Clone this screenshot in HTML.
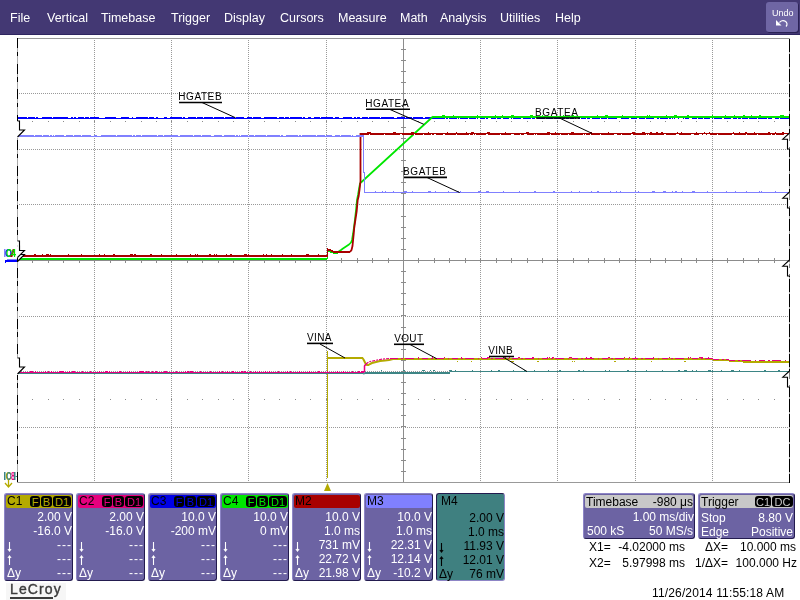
<!DOCTYPE html>
<html><head><meta charset="utf-8">
<style>
html,body{margin:0;padding:0;width:800px;height:600px;overflow:hidden;background:#fff;}
body{position:relative;font-family:"Liberation Sans",sans-serif;-webkit-font-smoothing:antialiased;}
.t,.mi,svg{will-change:transform;}
#menu{position:absolute;left:0;top:0;width:800px;height:34px;background:#433873;border-bottom:1px solid #2e2560;}
.mi{position:absolute;top:11px;color:#fff;font-size:12.5px;line-height:15px;white-space:nowrap;}
#undo{position:absolute;left:766px;top:2px;width:32px;height:30px;background:#6f66a4;border-radius:3px;box-shadow:1px 1px 0 #2a2255;}
svg{position:absolute;left:0;top:0;}
.pan{position:absolute;top:493px;width:69px;height:88px;background:#6c63a3;border-top:1px solid #8d85c6;border-left:1px solid #8d85c6;border-right:1px solid #231b4f;border-bottom:1px solid #231b4f;border-radius:3px;box-sizing:border-box;}
.ph{position:absolute;top:495px;width:66px;height:13px;border-radius:2px;}
.t{position:absolute;font-size:12px;line-height:14px;white-space:nowrap;color:#fff;}
.r{text-align:right;}
.bd{position:absolute;top:496px;height:11px;background:#000;border-radius:3px;font-size:11px;line-height:12px;text-align:center;}
</style></head><body>
<div id="menu">
<div class="mi" style="left:10px">File</div>
<div class="mi" style="left:47px">Vertical</div>
<div class="mi" style="left:101px">Timebase</div>
<div class="mi" style="left:171px">Trigger</div>
<div class="mi" style="left:224px">Display</div>
<div class="mi" style="left:280px">Cursors</div>
<div class="mi" style="left:338px">Measure</div>
<div class="mi" style="left:399.5px">Math</div>
<div class="mi" style="left:440px">Analysis</div>
<div class="mi" style="left:500px">Utilities</div>
<div class="mi" style="left:554.5px">Help</div>
<div id="undo"></div>
<div class="t" style="left:772px;top:6.5px;font-size:9px;line-height:12px;color:#fff">Undo</div>
</div>
<svg width="800" height="600" viewBox="0 0 800 600">
<g shape-rendering="crispEdges">
<line x1="17" y1="38.5" x2="790" y2="38.5" stroke="#999"/>
<line x1="17" y1="482.5" x2="790" y2="482.5" stroke="#999"/>
<line x1="17.5" y1="38" x2="17.5" y2="483" stroke="#aaa"/>
<line x1="789.5" y1="38" x2="789.5" y2="483" stroke="#aaa"/>
<line x1="17.5" y1="38" x2="17.5" y2="483" stroke="#000" stroke-width="1.3" stroke-dasharray="10 3.5 4.5 7.5"/>
<line x1="789.5" y1="38" x2="789.5" y2="483" stroke="#000" stroke-width="1.3" stroke-dasharray="12.5 2.5" stroke-dashoffset="-1"/>
<g stroke="#999" stroke-dasharray="1 1">
<line x1="94.5" y1="40" x2="94.5" y2="482"/>
<line x1="171.5" y1="40" x2="171.5" y2="482"/>
<line x1="248.5" y1="40" x2="248.5" y2="482"/>
<line x1="326.5" y1="40" x2="326.5" y2="482"/>
<line x1="480.5" y1="40" x2="480.5" y2="482"/>
<line x1="557.5" y1="40" x2="557.5" y2="482"/>
<line x1="635.5" y1="40" x2="635.5" y2="482"/>
<line x1="712.5" y1="40" x2="712.5" y2="482"/>
<line x1="19" y1="93.5" x2="788" y2="93.5"/>
<line x1="19" y1="149.5" x2="788" y2="149.5"/>
<line x1="19" y1="204.5" x2="788" y2="204.5"/>
<line x1="19" y1="316.5" x2="788" y2="316.5"/>
<line x1="19" y1="371.5" x2="788" y2="371.5"/>
<line x1="19" y1="427.5" x2="788" y2="427.5"/>
</g>
<g stroke="#8c8c8c">
<line x1="18" y1="260.5" x2="789" y2="260.5"/>
<line x1="403.5" y1="39" x2="403.5" y2="482"/>
<line x1="32.5" y1="258" x2="32.5" y2="263"/>
<line x1="48.5" y1="258" x2="48.5" y2="263"/>
<line x1="63.5" y1="258" x2="63.5" y2="263"/>
<line x1="79.5" y1="258" x2="79.5" y2="263"/>
<line x1="94.5" y1="258" x2="94.5" y2="263"/>
<line x1="110.5" y1="258" x2="110.5" y2="263"/>
<line x1="125.5" y1="258" x2="125.5" y2="263"/>
<line x1="141.5" y1="258" x2="141.5" y2="263"/>
<line x1="156.5" y1="258" x2="156.5" y2="263"/>
<line x1="171.5" y1="258" x2="171.5" y2="263"/>
<line x1="187.5" y1="258" x2="187.5" y2="263"/>
<line x1="202.5" y1="258" x2="202.5" y2="263"/>
<line x1="218.5" y1="258" x2="218.5" y2="263"/>
<line x1="233.5" y1="258" x2="233.5" y2="263"/>
<line x1="249.5" y1="258" x2="249.5" y2="263"/>
<line x1="264.5" y1="258" x2="264.5" y2="263"/>
<line x1="279.5" y1="258" x2="279.5" y2="263"/>
<line x1="295.5" y1="258" x2="295.5" y2="263"/>
<line x1="310.5" y1="258" x2="310.5" y2="263"/>
<line x1="326.5" y1="258" x2="326.5" y2="263"/>
<line x1="341.5" y1="258" x2="341.5" y2="263"/>
<line x1="357.5" y1="258" x2="357.5" y2="263"/>
<line x1="372.5" y1="258" x2="372.5" y2="263"/>
<line x1="388.5" y1="258" x2="388.5" y2="263"/>
<line x1="403.5" y1="258" x2="403.5" y2="263"/>
<line x1="418.5" y1="258" x2="418.5" y2="263"/>
<line x1="434.5" y1="258" x2="434.5" y2="263"/>
<line x1="449.5" y1="258" x2="449.5" y2="263"/>
<line x1="465.5" y1="258" x2="465.5" y2="263"/>
<line x1="480.5" y1="258" x2="480.5" y2="263"/>
<line x1="496.5" y1="258" x2="496.5" y2="263"/>
<line x1="511.5" y1="258" x2="511.5" y2="263"/>
<line x1="527.5" y1="258" x2="527.5" y2="263"/>
<line x1="542.5" y1="258" x2="542.5" y2="263"/>
<line x1="557.5" y1="258" x2="557.5" y2="263"/>
<line x1="573.5" y1="258" x2="573.5" y2="263"/>
<line x1="588.5" y1="258" x2="588.5" y2="263"/>
<line x1="604.5" y1="258" x2="604.5" y2="263"/>
<line x1="619.5" y1="258" x2="619.5" y2="263"/>
<line x1="635.5" y1="258" x2="635.5" y2="263"/>
<line x1="650.5" y1="258" x2="650.5" y2="263"/>
<line x1="665.5" y1="258" x2="665.5" y2="263"/>
<line x1="681.5" y1="258" x2="681.5" y2="263"/>
<line x1="696.5" y1="258" x2="696.5" y2="263"/>
<line x1="712.5" y1="258" x2="712.5" y2="263"/>
<line x1="727.5" y1="258" x2="727.5" y2="263"/>
<line x1="743.5" y1="258" x2="743.5" y2="263"/>
<line x1="758.5" y1="258" x2="758.5" y2="263"/>
<line x1="774.5" y1="258" x2="774.5" y2="263"/>
<line x1="401" y1="49.5" x2="406" y2="49.5"/>
<line x1="401" y1="60.5" x2="406" y2="60.5"/>
<line x1="401" y1="71.5" x2="406" y2="71.5"/>
<line x1="401" y1="82.5" x2="406" y2="82.5"/>
<line x1="401" y1="93.5" x2="406" y2="93.5"/>
<line x1="401" y1="105.5" x2="406" y2="105.5"/>
<line x1="401" y1="116.5" x2="406" y2="116.5"/>
<line x1="401" y1="127.5" x2="406" y2="127.5"/>
<line x1="401" y1="138.5" x2="406" y2="138.5"/>
<line x1="401" y1="149.5" x2="406" y2="149.5"/>
<line x1="401" y1="160.5" x2="406" y2="160.5"/>
<line x1="401" y1="171.5" x2="406" y2="171.5"/>
<line x1="401" y1="182.5" x2="406" y2="182.5"/>
<line x1="401" y1="193.5" x2="406" y2="193.5"/>
<line x1="401" y1="204.5" x2="406" y2="204.5"/>
<line x1="401" y1="216.5" x2="406" y2="216.5"/>
<line x1="401" y1="227.5" x2="406" y2="227.5"/>
<line x1="401" y1="238.5" x2="406" y2="238.5"/>
<line x1="401" y1="249.5" x2="406" y2="249.5"/>
<line x1="401" y1="260.5" x2="406" y2="260.5"/>
<line x1="401" y1="271.5" x2="406" y2="271.5"/>
<line x1="401" y1="282.5" x2="406" y2="282.5"/>
<line x1="401" y1="293.5" x2="406" y2="293.5"/>
<line x1="401" y1="304.5" x2="406" y2="304.5"/>
<line x1="401" y1="315.5" x2="406" y2="315.5"/>
<line x1="401" y1="327.5" x2="406" y2="327.5"/>
<line x1="401" y1="338.5" x2="406" y2="338.5"/>
<line x1="401" y1="349.5" x2="406" y2="349.5"/>
<line x1="401" y1="360.5" x2="406" y2="360.5"/>
<line x1="401" y1="371.5" x2="406" y2="371.5"/>
<line x1="401" y1="382.5" x2="406" y2="382.5"/>
<line x1="401" y1="393.5" x2="406" y2="393.5"/>
<line x1="401" y1="404.5" x2="406" y2="404.5"/>
<line x1="401" y1="415.5" x2="406" y2="415.5"/>
<line x1="401" y1="426.5" x2="406" y2="426.5"/>
<line x1="401" y1="438.5" x2="406" y2="438.5"/>
<line x1="401" y1="449.5" x2="406" y2="449.5"/>
<line x1="401" y1="460.5" x2="406" y2="460.5"/>
<line x1="401" y1="471.5" x2="406" y2="471.5"/>
</g>
</g>
<line x1="18" y1="373" x2="327" y2="373" stroke="#b4aa00" stroke-width="2" shape-rendering="crispEdges"/>
<line x1="327.5" y1="351" x2="327.5" y2="478" stroke="#b4aa00" stroke-width="1" shape-rendering="crispEdges"/>
<line x1="327" y1="358" x2="363" y2="358" stroke="#b4aa00" stroke-width="2" shape-rendering="crispEdges"/>
<path d="M362.5 358 L363.5 359.5 L364.5 361.5 L365.5 363.5 L367 365 L368.5 365 L370 364 L372 363 L376 362 L380 361 L385 360.5 L389 360 L393 359" fill="none" stroke="#b4aa00" stroke-width="2" stroke-linejoin="round"/>
<line x1="393" y1="359" x2="713" y2="359" stroke="#b4aa00" stroke-width="2" shape-rendering="crispEdges"/>
<line x1="713" y1="360" x2="729" y2="360" stroke="#b4aa00" stroke-width="2" shape-rendering="crispEdges"/>
<line x1="729" y1="361" x2="743" y2="361" stroke="#b4aa00" stroke-width="2" shape-rendering="crispEdges"/>
<line x1="743" y1="362" x2="789" y2="362" stroke="#b4aa00" stroke-width="2" shape-rendering="crispEdges"/>
<line x1="18" y1="372.5" x2="364" y2="372.5" stroke="#e6007e" stroke-width="1" shape-rendering="crispEdges"/>
<path d="M364.5 372.5 L364.5 366 L366 364" fill="none" stroke="#e6007e" stroke-width="1.5" stroke-linejoin="round"/>
<g stroke-dasharray="3 1 2 1">
<path d="M366 364 L368 362.5 L370 361.5 L375 360.5 L380 359.5 L385 358.8 L392 358.5" fill="none" stroke="#e6007e" stroke-width="1.2" stroke-linejoin="round"/>
</g>
<g stroke-dasharray="6 3 2 2 9 4 1 3">
<line x1="392" y1="358.5" x2="713" y2="358.5" stroke="#e6007e" stroke-width="1" shape-rendering="crispEdges"/>
<line x1="713" y1="359.5" x2="729" y2="359.5" stroke="#e6007e" stroke-width="1" shape-rendering="crispEdges"/>
<line x1="729" y1="360.5" x2="789" y2="360.5" stroke="#e6007e" stroke-width="1" shape-rendering="crispEdges"/>
</g>
<line x1="18" y1="118" x2="789" y2="118" stroke="#0000ff" stroke-width="2" shape-rendering="crispEdges"/>
<line x1="18" y1="259" x2="327" y2="259" stroke="#00e600" stroke-width="2" shape-rendering="crispEdges"/>
<line x1="327.5" y1="250" x2="327.5" y2="259" stroke="#00e600" stroke-width="1.5" shape-rendering="crispEdges"/>
<line x1="327" y1="251" x2="330" y2="251" stroke="#00e600" stroke-width="2" shape-rendering="crispEdges"/>
<line x1="330" y1="252" x2="333" y2="252" stroke="#00e600" stroke-width="2" shape-rendering="crispEdges"/>
<line x1="333" y1="253" x2="338" y2="253" stroke="#00e600" stroke-width="2" shape-rendering="crispEdges"/>
<path d="M338 252 L341 250 L343 248.5 L346 246.5 L349 244.5 L351 242.5 L352 240 L353 234 L354 227 L355 219 L356 210 L357 200 L358 195 L359 189 L360 183.5 L361.5 182 L433 116.5" fill="none" stroke="#00e600" stroke-width="1.7" stroke-linejoin="round"/>
<line x1="433" y1="117" x2="789" y2="117" stroke="#00e600" stroke-width="2" shape-rendering="crispEdges"/>
<line x1="18" y1="256" x2="327" y2="256" stroke="#a80000" stroke-width="2" shape-rendering="crispEdges"/>
<line x1="327.5" y1="248" x2="327.5" y2="257" stroke="#a80000" stroke-width="1" shape-rendering="crispEdges"/>
<line x1="327" y1="250" x2="330.5" y2="250" stroke="#a80000" stroke-width="2" shape-rendering="crispEdges"/>
<line x1="330.5" y1="251" x2="333" y2="251" stroke="#a80000" stroke-width="2" shape-rendering="crispEdges"/>
<line x1="333" y1="252" x2="350" y2="252" stroke="#a80000" stroke-width="2" shape-rendering="crispEdges"/>
<path d="M350 252 L351.5 250 L352.5 246 L353 241 L353.7 234 L354.2 228 L355.5 219 L356.7 211 L357.7 200 L358.7 196 L359.5 190 L360.5 181 L360.5 133" fill="none" stroke="#a80000" stroke-width="1.8" stroke-linejoin="round"/>
<line x1="360" y1="134" x2="789" y2="134" stroke="#a80000" stroke-width="2" shape-rendering="crispEdges"/>
<line x1="18" y1="136" x2="364" y2="136" stroke="#8080ff" stroke-width="2" shape-rendering="crispEdges"/>
<line x1="363.5" y1="135" x2="363.5" y2="173" stroke="#8080ff" stroke-width="1" shape-rendering="crispEdges"/>
<line x1="364.5" y1="172" x2="364.5" y2="193" stroke="#8080ff" stroke-width="1" shape-rendering="crispEdges"/>
<line x1="364" y1="192.5" x2="789" y2="192.5" stroke="#8080ff" stroke-width="1" shape-rendering="crispEdges"/>
<line x1="18" y1="373.5" x2="363" y2="373.5" stroke="#3d8585" stroke-width="1" shape-rendering="crispEdges"/>
<path d="M363 373.5 L364 374 L365 372.5" fill="none" stroke="#3d8585" stroke-width="1.2" stroke-linejoin="round"/>
<line x1="365" y1="373" x2="450" y2="373" stroke="#3d8585" stroke-width="2" shape-rendering="crispEdges"/>
<line x1="450" y1="371.5" x2="789" y2="371.5" stroke="#3d8585" stroke-width="1" shape-rendering="crispEdges"/>
<g fill="#fff" shape-rendering="crispEdges"><rect x="27" y="117" width="1" height="1"/><rect x="35" y="117" width="1" height="1"/><rect x="38" y="117" width="3" height="1"/><rect x="41" y="117" width="1" height="1"/><rect x="52" y="117" width="1" height="1"/><rect x="68" y="117" width="3" height="1"/><rect x="73" y="117" width="1" height="1"/><rect x="76" y="117" width="2" height="1"/><rect x="84" y="117" width="1" height="1"/><rect x="89" y="117" width="1" height="1"/><rect x="99" y="117" width="2" height="1"/><rect x="101" y="117" width="3" height="1"/><rect x="104" y="117" width="1" height="1"/><rect x="116" y="117" width="3" height="1"/><rect x="118" y="117" width="3" height="1"/><rect x="129" y="117" width="2" height="1"/><rect x="131" y="117" width="1" height="1"/><rect x="133" y="117" width="3" height="1"/><rect x="148" y="117" width="1" height="1"/><rect x="154" y="117" width="2" height="1"/><rect x="158" y="117" width="3" height="1"/><rect x="161" y="117" width="3" height="1"/><rect x="167" y="117" width="3" height="1"/><rect x="182" y="117" width="1" height="1"/><rect x="185" y="117" width="3" height="1"/><rect x="196" y="117" width="1" height="1"/><rect x="203" y="117" width="1" height="1"/><rect x="213" y="117" width="1" height="1"/><rect x="224" y="117" width="1" height="1"/><rect x="235" y="117" width="1" height="1"/><rect x="244" y="117" width="3" height="1"/><rect x="252" y="117" width="1" height="1"/><rect x="261" y="117" width="3" height="1"/><rect x="277" y="117" width="2" height="1"/><rect x="284" y="117" width="1" height="1"/><rect x="289" y="117" width="1" height="1"/><rect x="302" y="117" width="1" height="1"/><rect x="305" y="117" width="3" height="1"/><rect x="311" y="117" width="3" height="1"/><rect x="320" y="117" width="1" height="1"/><rect x="333" y="117" width="2" height="1"/><rect x="339" y="117" width="3" height="1"/><rect x="342" y="117" width="1" height="1"/><rect x="352" y="117" width="2" height="1"/><rect x="356" y="117" width="1" height="1"/><rect x="360" y="117" width="2" height="1"/><rect x="368" y="117" width="1" height="1"/><rect x="380" y="117" width="1" height="1"/><rect x="394" y="117" width="3" height="1"/><rect x="405" y="117" width="1" height="1"/><rect x="412" y="117" width="1" height="1"/><rect x="423" y="117" width="2" height="1"/></g>
<g fill="#fff" shape-rendering="crispEdges"><rect x="445" y="118" width="1" height="1"/><rect x="448" y="118" width="1" height="1"/><rect x="457" y="118" width="1" height="1"/><rect x="459" y="118" width="1" height="1"/><rect x="468" y="118" width="1" height="1"/><rect x="476" y="118" width="1" height="1"/><rect x="478" y="118" width="2" height="1"/><rect x="485" y="118" width="1" height="1"/><rect x="488" y="118" width="2" height="1"/><rect x="490" y="118" width="1" height="1"/><rect x="496" y="118" width="1" height="1"/><rect x="501" y="118" width="2" height="1"/><rect x="509" y="118" width="2" height="1"/><rect x="512" y="118" width="1" height="1"/><rect x="521" y="118" width="2" height="1"/><rect x="531" y="118" width="1" height="1"/><rect x="535" y="118" width="2" height="1"/><rect x="545" y="118" width="1" height="1"/><rect x="553" y="118" width="1" height="1"/><rect x="561" y="118" width="1" height="1"/><rect x="565" y="118" width="1" height="1"/><rect x="569" y="118" width="1" height="1"/><rect x="574" y="118" width="1" height="1"/><rect x="576" y="118" width="2" height="1"/><rect x="580" y="118" width="1" height="1"/><rect x="586" y="118" width="1" height="1"/><rect x="590" y="118" width="2" height="1"/><rect x="600" y="118" width="1" height="1"/><rect x="607" y="118" width="1" height="1"/><rect x="617" y="118" width="3" height="1"/><rect x="619" y="118" width="2" height="1"/><rect x="629" y="118" width="2" height="1"/><rect x="637" y="118" width="2" height="1"/><rect x="645" y="118" width="1" height="1"/><rect x="654" y="118" width="2" height="1"/><rect x="656" y="118" width="1" height="1"/><rect x="659" y="118" width="1" height="1"/><rect x="668" y="118" width="1" height="1"/><rect x="671" y="118" width="1" height="1"/><rect x="673" y="118" width="1" height="1"/><rect x="675" y="118" width="3" height="1"/><rect x="679" y="118" width="3" height="1"/><rect x="682" y="118" width="1" height="1"/><rect x="684" y="118" width="1" height="1"/><rect x="689" y="118" width="3" height="1"/><rect x="697" y="118" width="1" height="1"/><rect x="703" y="118" width="1" height="1"/><rect x="710" y="118" width="2" height="1"/><rect x="713" y="118" width="1" height="1"/><rect x="722" y="118" width="2" height="1"/><rect x="731" y="118" width="2" height="1"/><rect x="737" y="118" width="1" height="1"/><rect x="741" y="118" width="1" height="1"/><rect x="748" y="118" width="1" height="1"/><rect x="757" y="118" width="1" height="1"/><rect x="767" y="118" width="1" height="1"/><rect x="772" y="118" width="3" height="1"/><rect x="779" y="118" width="1" height="1"/></g>
<g fill="#00e600" shape-rendering="crispEdges"><rect x="442" y="115" width="3" height="1"/><rect x="453" y="115" width="1" height="1"/><rect x="477" y="115" width="1" height="1"/><rect x="495" y="115" width="1" height="1"/><rect x="502" y="115" width="1" height="1"/><rect x="511" y="115" width="3" height="1"/><rect x="530" y="115" width="3" height="1"/><rect x="542" y="115" width="1" height="1"/><rect x="563" y="115" width="1" height="1"/><rect x="572" y="115" width="2" height="1"/><rect x="597" y="115" width="1" height="1"/><rect x="605" y="115" width="3" height="1"/><rect x="622" y="115" width="1" height="1"/><rect x="647" y="115" width="1" height="1"/><rect x="649" y="115" width="1" height="1"/><rect x="666" y="115" width="1" height="1"/><rect x="674" y="115" width="3" height="1"/><rect x="687" y="115" width="2" height="1"/><rect x="712" y="115" width="1" height="1"/><rect x="725" y="115" width="1" height="1"/><rect x="734" y="115" width="1" height="1"/><rect x="743" y="115" width="2" height="1"/><rect x="751" y="115" width="1" height="1"/><rect x="759" y="115" width="2" height="1"/><rect x="780" y="115" width="3" height="1"/><rect x="782" y="115" width="2" height="1"/></g>
<g fill="#fff" shape-rendering="crispEdges"><rect x="369" y="134" width="1" height="1"/><rect x="384" y="134" width="1" height="1"/><rect x="400" y="134" width="2" height="1"/><rect x="414" y="134" width="1" height="1"/><rect x="423" y="134" width="1" height="1"/><rect x="431" y="134" width="1" height="1"/><rect x="434" y="134" width="2" height="1"/><rect x="443" y="134" width="2" height="1"/><rect x="456" y="134" width="1" height="1"/><rect x="469" y="134" width="1" height="1"/><rect x="473" y="134" width="1" height="1"/><rect x="475" y="134" width="1" height="1"/><rect x="486" y="134" width="2" height="1"/><rect x="500" y="134" width="1" height="1"/><rect x="511" y="134" width="3" height="1"/><rect x="520" y="134" width="1" height="1"/><rect x="524" y="134" width="3" height="1"/><rect x="534" y="134" width="1" height="1"/><rect x="536" y="134" width="1" height="1"/><rect x="550" y="134" width="1" height="1"/><rect x="560" y="134" width="1" height="1"/><rect x="568" y="134" width="1" height="1"/><rect x="583" y="134" width="1" height="1"/><rect x="585" y="134" width="1" height="1"/><rect x="590" y="134" width="1" height="1"/><rect x="600" y="134" width="1" height="1"/><rect x="614" y="134" width="3" height="1"/><rect x="621" y="134" width="1" height="1"/><rect x="631" y="134" width="2" height="1"/><rect x="646" y="134" width="1" height="1"/><rect x="648" y="134" width="1" height="1"/><rect x="664" y="134" width="2" height="1"/><rect x="676" y="134" width="3" height="1"/><rect x="691" y="134" width="3" height="1"/><rect x="699" y="134" width="3" height="1"/><rect x="703" y="134" width="3" height="1"/><rect x="707" y="134" width="3" height="1"/><rect x="717" y="134" width="1" height="1"/><rect x="732" y="134" width="2" height="1"/><rect x="746" y="134" width="1" height="1"/><rect x="757" y="134" width="1" height="1"/><rect x="771" y="134" width="1" height="1"/><rect x="775" y="134" width="1" height="1"/><rect x="784" y="134" width="3" height="1"/></g>
<g fill="#a80000" shape-rendering="crispEdges"><rect x="367" y="132" width="3" height="1"/><rect x="370" y="132" width="1" height="1"/><rect x="393" y="132" width="3" height="1"/><rect x="411" y="132" width="3" height="1"/><rect x="428" y="132" width="1" height="1"/><rect x="447" y="132" width="1" height="1"/><rect x="456" y="132" width="1" height="1"/><rect x="466" y="132" width="1" height="1"/><rect x="471" y="132" width="3" height="1"/><rect x="487" y="132" width="3" height="1"/><rect x="489" y="132" width="1" height="1"/><rect x="505" y="132" width="1" height="1"/><rect x="526" y="132" width="3" height="1"/><rect x="547" y="132" width="3" height="1"/><rect x="555" y="132" width="1" height="1"/><rect x="571" y="132" width="3" height="1"/><rect x="590" y="132" width="2" height="1"/><rect x="608" y="132" width="1" height="1"/><rect x="632" y="132" width="3" height="1"/><rect x="642" y="132" width="3" height="1"/><rect x="650" y="132" width="2" height="1"/><rect x="656" y="132" width="2" height="1"/><rect x="661" y="132" width="2" height="1"/><rect x="677" y="132" width="1" height="1"/><rect x="681" y="132" width="1" height="1"/><rect x="696" y="132" width="1" height="1"/><rect x="704" y="132" width="1" height="1"/><rect x="709" y="132" width="1" height="1"/><rect x="733" y="132" width="1" height="1"/><rect x="739" y="132" width="1" height="1"/><rect x="745" y="132" width="2" height="1"/><rect x="754" y="132" width="1" height="1"/><rect x="768" y="132" width="2" height="1"/><rect x="775" y="132" width="1" height="1"/><rect x="782" y="132" width="2" height="1"/></g>
<g fill="#fff" shape-rendering="crispEdges"><rect x="34" y="135" width="1" height="1"/><rect x="42" y="135" width="1" height="1"/><rect x="49" y="135" width="1" height="1"/><rect x="52" y="135" width="1" height="1"/><rect x="54" y="135" width="1" height="1"/><rect x="64" y="135" width="2" height="1"/><rect x="73" y="135" width="1" height="1"/><rect x="81" y="135" width="1" height="1"/><rect x="91" y="135" width="3" height="1"/><rect x="97" y="135" width="3" height="1"/><rect x="100" y="135" width="1" height="1"/><rect x="116" y="135" width="1" height="1"/><rect x="132" y="135" width="1" height="1"/><rect x="135" y="135" width="1" height="1"/><rect x="141" y="135" width="1" height="1"/><rect x="157" y="135" width="1" height="1"/><rect x="163" y="135" width="1" height="1"/><rect x="178" y="135" width="2" height="1"/><rect x="193" y="135" width="1" height="1"/><rect x="201" y="135" width="1" height="1"/><rect x="211" y="135" width="3" height="1"/><rect x="222" y="135" width="2" height="1"/><rect x="235" y="135" width="1" height="1"/><rect x="238" y="135" width="1" height="1"/><rect x="240" y="135" width="1" height="1"/><rect x="248" y="135" width="1" height="1"/><rect x="254" y="135" width="1" height="1"/><rect x="266" y="135" width="1" height="1"/><rect x="280" y="135" width="1" height="1"/><rect x="283" y="135" width="3" height="1"/><rect x="298" y="135" width="1" height="1"/><rect x="301" y="135" width="1" height="1"/><rect x="316" y="135" width="1" height="1"/><rect x="325" y="135" width="1" height="1"/><rect x="332" y="135" width="3" height="1"/><rect x="340" y="135" width="1" height="1"/><rect x="351" y="135" width="1" height="1"/><rect x="353" y="135" width="3" height="1"/></g>
<g fill="#8080ff" shape-rendering="crispEdges"><rect x="375" y="191" width="1" height="1"/><rect x="382" y="191" width="1" height="1"/><rect x="385" y="191" width="1" height="1"/><rect x="393" y="191" width="1" height="1"/><rect x="404" y="191" width="3" height="1"/><rect x="412" y="191" width="1" height="1"/><rect x="428" y="191" width="3" height="1"/><rect x="435" y="191" width="1" height="1"/><rect x="448" y="191" width="1" height="1"/><rect x="458" y="191" width="1" height="1"/><rect x="460" y="191" width="1" height="1"/><rect x="478" y="191" width="3" height="1"/><rect x="486" y="191" width="3" height="1"/><rect x="503" y="191" width="1" height="1"/><rect x="519" y="191" width="1" height="1"/><rect x="534" y="191" width="2" height="1"/><rect x="553" y="191" width="2" height="1"/><rect x="571" y="191" width="1" height="1"/><rect x="579" y="191" width="1" height="1"/><rect x="591" y="191" width="1" height="1"/><rect x="597" y="191" width="2" height="1"/><rect x="610" y="191" width="1" height="1"/><rect x="616" y="191" width="1" height="1"/><rect x="620" y="191" width="1" height="1"/><rect x="635" y="191" width="1" height="1"/><rect x="638" y="191" width="1" height="1"/><rect x="652" y="191" width="3" height="1"/><rect x="663" y="191" width="3" height="1"/><rect x="672" y="191" width="1" height="1"/><rect x="675" y="191" width="2" height="1"/><rect x="682" y="191" width="1" height="1"/><rect x="692" y="191" width="2" height="1"/><rect x="694" y="191" width="1" height="1"/><rect x="707" y="191" width="1" height="1"/><rect x="726" y="191" width="1" height="1"/><rect x="735" y="191" width="1" height="1"/><rect x="746" y="191" width="1" height="1"/><rect x="759" y="191" width="1" height="1"/><rect x="761" y="191" width="1" height="1"/><rect x="775" y="191" width="1" height="1"/></g>
<g fill="#e6007e" shape-rendering="crispEdges"><rect x="30" y="371" width="3" height="1"/><rect x="35" y="371" width="1" height="1"/><rect x="45" y="371" width="1" height="1"/><rect x="48" y="371" width="1" height="1"/><rect x="51" y="371" width="1" height="1"/><rect x="59" y="371" width="3" height="1"/><rect x="61" y="371" width="2" height="1"/><rect x="63" y="371" width="1" height="1"/><rect x="69" y="371" width="1" height="1"/><rect x="72" y="371" width="3" height="1"/><rect x="82" y="371" width="1" height="1"/><rect x="90" y="371" width="1" height="1"/><rect x="99" y="371" width="1" height="1"/><rect x="105" y="371" width="3" height="1"/><rect x="109" y="371" width="1" height="1"/><rect x="119" y="371" width="2" height="1"/><rect x="129" y="371" width="1" height="1"/><rect x="139" y="371" width="3" height="1"/><rect x="141" y="371" width="3" height="1"/><rect x="146" y="371" width="1" height="1"/><rect x="148" y="371" width="1" height="1"/><rect x="152" y="371" width="1" height="1"/><rect x="155" y="371" width="2" height="1"/><rect x="164" y="371" width="3" height="1"/><rect x="166" y="371" width="1" height="1"/><rect x="176" y="371" width="1" height="1"/><rect x="185" y="371" width="1" height="1"/><rect x="187" y="371" width="2" height="1"/><rect x="190" y="371" width="3" height="1"/><rect x="200" y="371" width="1" height="1"/><rect x="210" y="371" width="1" height="1"/><rect x="219" y="371" width="1" height="1"/><rect x="222" y="371" width="1" height="1"/><rect x="227" y="371" width="1" height="1"/><rect x="232" y="371" width="2" height="1"/><rect x="241" y="371" width="2" height="1"/><rect x="244" y="371" width="2" height="1"/><rect x="250" y="371" width="1" height="1"/><rect x="255" y="371" width="1" height="1"/><rect x="259" y="371" width="1" height="1"/><rect x="265" y="371" width="1" height="1"/><rect x="269" y="371" width="1" height="1"/><rect x="278" y="371" width="1" height="1"/><rect x="287" y="371" width="1" height="1"/><rect x="290" y="371" width="1" height="1"/><rect x="299" y="371" width="1" height="1"/><rect x="309" y="371" width="1" height="1"/><rect x="318" y="371" width="2" height="1"/><rect x="327" y="371" width="1" height="1"/><rect x="337" y="371" width="1" height="1"/><rect x="343" y="371" width="1" height="1"/><rect x="352" y="371" width="1" height="1"/><rect x="358" y="371" width="2" height="1"/><rect x="361" y="371" width="3" height="1"/></g>
<g fill="#a80000" shape-rendering="crispEdges"><rect x="34" y="254" width="2" height="1"/><rect x="42" y="254" width="1" height="1"/><rect x="46" y="254" width="3" height="1"/><rect x="50" y="254" width="1" height="1"/><rect x="68" y="254" width="1" height="1"/><rect x="81" y="254" width="1" height="1"/><rect x="99" y="254" width="1" height="1"/><rect x="104" y="254" width="1" height="1"/><rect x="113" y="254" width="2" height="1"/><rect x="130" y="254" width="2" height="1"/><rect x="132" y="254" width="1" height="1"/><rect x="134" y="254" width="2" height="1"/><rect x="150" y="254" width="2" height="1"/><rect x="161" y="254" width="1" height="1"/><rect x="176" y="254" width="1" height="1"/><rect x="190" y="254" width="1" height="1"/><rect x="195" y="254" width="1" height="1"/><rect x="197" y="254" width="1" height="1"/><rect x="209" y="254" width="2" height="1"/><rect x="214" y="254" width="1" height="1"/><rect x="216" y="254" width="1" height="1"/><rect x="226" y="254" width="1" height="1"/><rect x="230" y="254" width="2" height="1"/><rect x="244" y="254" width="3" height="1"/><rect x="248" y="254" width="1" height="1"/><rect x="263" y="254" width="1" height="1"/><rect x="266" y="254" width="1" height="1"/><rect x="271" y="254" width="1" height="1"/><rect x="282" y="254" width="1" height="1"/><rect x="291" y="254" width="1" height="1"/><rect x="306" y="254" width="3" height="1"/><rect x="318" y="254" width="1" height="1"/></g>
<g fill="#3d8585" shape-rendering="crispEdges"><rect x="381" y="370" width="1" height="1"/><rect x="403" y="370" width="2" height="1"/><rect x="422" y="370" width="3" height="1"/><rect x="430" y="370" width="1" height="1"/><rect x="433" y="370" width="2" height="1"/><rect x="449" y="370" width="3" height="1"/><rect x="455" y="370" width="1" height="1"/><rect x="472" y="370" width="1" height="1"/><rect x="491" y="370" width="1" height="1"/><rect x="498" y="370" width="2" height="1"/><rect x="513" y="370" width="1" height="1"/><rect x="524" y="370" width="1" height="1"/><rect x="534" y="370" width="1" height="1"/><rect x="548" y="370" width="1" height="1"/><rect x="559" y="370" width="2" height="1"/><rect x="578" y="370" width="2" height="1"/><rect x="583" y="370" width="1" height="1"/><rect x="605" y="370" width="1" height="1"/><rect x="609" y="370" width="1" height="1"/><rect x="627" y="370" width="2" height="1"/><rect x="646" y="370" width="1" height="1"/><rect x="662" y="370" width="1" height="1"/><rect x="678" y="370" width="2" height="1"/><rect x="684" y="370" width="3" height="1"/><rect x="692" y="370" width="1" height="1"/><rect x="696" y="370" width="1" height="1"/><rect x="708" y="370" width="3" height="1"/><rect x="712" y="370" width="1" height="1"/><rect x="721" y="370" width="1" height="1"/><rect x="731" y="370" width="3" height="1"/><rect x="739" y="370" width="1" height="1"/><rect x="764" y="370" width="2" height="1"/><rect x="778" y="370" width="2" height="1"/></g>
<g fill="#e6007e" shape-rendering="crispEdges"><rect x="418" y="357" width="1" height="1"/><rect x="432" y="357" width="1" height="1"/><rect x="444" y="357" width="1" height="1"/><rect x="461" y="357" width="1" height="1"/><rect x="481" y="357" width="1" height="1"/><rect x="487" y="357" width="3" height="1"/><rect x="505" y="357" width="1" height="1"/><rect x="509" y="357" width="1" height="1"/><rect x="518" y="357" width="2" height="1"/><rect x="532" y="357" width="2" height="1"/><rect x="547" y="357" width="1" height="1"/><rect x="549" y="357" width="1" height="1"/><rect x="552" y="357" width="2" height="1"/><rect x="569" y="357" width="3" height="1"/><rect x="586" y="357" width="1" height="1"/><rect x="590" y="357" width="2" height="1"/><rect x="608" y="357" width="2" height="1"/><rect x="624" y="357" width="1" height="1"/><rect x="629" y="357" width="1" height="1"/><rect x="635" y="357" width="1" height="1"/><rect x="653" y="357" width="1" height="1"/><rect x="669" y="357" width="1" height="1"/><rect x="688" y="357" width="1" height="1"/><rect x="690" y="357" width="1" height="1"/><rect x="699" y="357" width="3" height="1"/><rect x="702" y="357" width="1" height="1"/><rect x="708" y="357" width="1" height="1"/></g>
<g fill="#b4aa00" shape-rendering="crispEdges"><rect x="457" y="361" width="1" height="1"/><rect x="471" y="361" width="1" height="1"/><rect x="511" y="361" width="3" height="1"/><rect x="537" y="361" width="2" height="1"/><rect x="572" y="361" width="1" height="1"/><rect x="574" y="361" width="1" height="1"/><rect x="614" y="361" width="2" height="1"/><rect x="651" y="361" width="1" height="1"/><rect x="684" y="361" width="2" height="1"/></g>
<polygon points="324,491 331,491 327.5,483" fill="#b4aa00"/>
<g fill="#8c8c8c" shape-rendering="crispEdges">
<rect x="32" y="121" width="1" height="1"/>
<rect x="48" y="121" width="1" height="1"/>
<rect x="63" y="121" width="1" height="1"/>
<rect x="79" y="121" width="1" height="1"/>
<rect x="94" y="121" width="1" height="1"/>
<rect x="110" y="121" width="1" height="1"/>
<rect x="125" y="121" width="1" height="1"/>
<rect x="141" y="121" width="1" height="1"/>
<rect x="156" y="121" width="1" height="1"/>
<rect x="171" y="121" width="1" height="1"/>
<rect x="187" y="121" width="1" height="1"/>
<rect x="202" y="121" width="1" height="1"/>
<rect x="218" y="121" width="1" height="1"/>
<rect x="233" y="121" width="1" height="1"/>
<rect x="249" y="121" width="1" height="1"/>
<rect x="264" y="121" width="1" height="1"/>
<rect x="279" y="121" width="1" height="1"/>
<rect x="295" y="121" width="1" height="1"/>
<rect x="310" y="121" width="1" height="1"/>
<rect x="326" y="121" width="1" height="1"/>
<rect x="341" y="121" width="1" height="1"/>
<rect x="357" y="121" width="1" height="1"/>
<rect x="372" y="121" width="1" height="1"/>
<rect x="388" y="121" width="1" height="1"/>
<rect x="403" y="121" width="1" height="1"/>
<rect x="418" y="121" width="1" height="1"/>
<rect x="434" y="121" width="1" height="1"/>
<rect x="449" y="121" width="1" height="1"/>
<rect x="465" y="121" width="1" height="1"/>
<rect x="480" y="121" width="1" height="1"/>
<rect x="496" y="121" width="1" height="1"/>
<rect x="511" y="121" width="1" height="1"/>
<rect x="527" y="121" width="1" height="1"/>
<rect x="542" y="121" width="1" height="1"/>
<rect x="557" y="121" width="1" height="1"/>
<rect x="573" y="121" width="1" height="1"/>
<rect x="588" y="121" width="1" height="1"/>
<rect x="604" y="121" width="1" height="1"/>
<rect x="619" y="121" width="1" height="1"/>
<rect x="635" y="121" width="1" height="1"/>
<rect x="650" y="121" width="1" height="1"/>
<rect x="665" y="121" width="1" height="1"/>
<rect x="681" y="121" width="1" height="1"/>
<rect x="696" y="121" width="1" height="1"/>
<rect x="712" y="121" width="1" height="1"/>
<rect x="727" y="121" width="1" height="1"/>
<rect x="743" y="121" width="1" height="1"/>
<rect x="758" y="121" width="1" height="1"/>
<rect x="774" y="121" width="1" height="1"/>
<rect x="32" y="399" width="1" height="1"/>
<rect x="48" y="399" width="1" height="1"/>
<rect x="63" y="399" width="1" height="1"/>
<rect x="79" y="399" width="1" height="1"/>
<rect x="94" y="399" width="1" height="1"/>
<rect x="110" y="399" width="1" height="1"/>
<rect x="125" y="399" width="1" height="1"/>
<rect x="141" y="399" width="1" height="1"/>
<rect x="156" y="399" width="1" height="1"/>
<rect x="171" y="399" width="1" height="1"/>
<rect x="187" y="399" width="1" height="1"/>
<rect x="202" y="399" width="1" height="1"/>
<rect x="218" y="399" width="1" height="1"/>
<rect x="233" y="399" width="1" height="1"/>
<rect x="249" y="399" width="1" height="1"/>
<rect x="264" y="399" width="1" height="1"/>
<rect x="279" y="399" width="1" height="1"/>
<rect x="295" y="399" width="1" height="1"/>
<rect x="310" y="399" width="1" height="1"/>
<rect x="326" y="399" width="1" height="1"/>
<rect x="341" y="399" width="1" height="1"/>
<rect x="357" y="399" width="1" height="1"/>
<rect x="372" y="399" width="1" height="1"/>
<rect x="388" y="399" width="1" height="1"/>
<rect x="403" y="399" width="1" height="1"/>
<rect x="418" y="399" width="1" height="1"/>
<rect x="434" y="399" width="1" height="1"/>
<rect x="449" y="399" width="1" height="1"/>
<rect x="465" y="399" width="1" height="1"/>
<rect x="480" y="399" width="1" height="1"/>
<rect x="496" y="399" width="1" height="1"/>
<rect x="511" y="399" width="1" height="1"/>
<rect x="527" y="399" width="1" height="1"/>
<rect x="542" y="399" width="1" height="1"/>
<rect x="557" y="399" width="1" height="1"/>
<rect x="573" y="399" width="1" height="1"/>
<rect x="588" y="399" width="1" height="1"/>
<rect x="604" y="399" width="1" height="1"/>
<rect x="619" y="399" width="1" height="1"/>
<rect x="635" y="399" width="1" height="1"/>
<rect x="650" y="399" width="1" height="1"/>
<rect x="665" y="399" width="1" height="1"/>
<rect x="681" y="399" width="1" height="1"/>
<rect x="696" y="399" width="1" height="1"/>
<rect x="712" y="399" width="1" height="1"/>
<rect x="727" y="399" width="1" height="1"/>
<rect x="743" y="399" width="1" height="1"/>
<rect x="758" y="399" width="1" height="1"/>
<rect x="774" y="399" width="1" height="1"/>
</g>
<g font-family="Liberation Sans" font-size="10" fill="#000" letter-spacing="0.3">
<text x="178.2" y="99.6" letter-spacing="0.6">HGATEB</text>
<line x1="179" y1="102.5" x2="222" y2="102.5" stroke="#000" stroke-width="1.6"/>
<line x1="202" y1="102.5" x2="235.6" y2="117.8" stroke="#000" stroke-width="1"/>
<text x="365.2" y="106.6" letter-spacing="0.6">HGATEA</text>
<line x1="366" y1="109.3" x2="410" y2="109.3" stroke="#000" stroke-width="1.6"/>
<line x1="390" y1="109.5" x2="423.8" y2="124.3" stroke="#000" stroke-width="1"/>
<text x="535" y="116" letter-spacing="0.6">BGATEA</text>
<line x1="536" y1="118" x2="580" y2="118" stroke="#000" stroke-width="1.6"/>
<line x1="559.4" y1="118" x2="592" y2="133.4" stroke="#000" stroke-width="1"/>
<text x="403" y="174.8" letter-spacing="0.6">BGATEB</text>
<line x1="404" y1="177.4" x2="447" y2="177.4" stroke="#000" stroke-width="1.6"/>
<line x1="427" y1="177.5" x2="459.7" y2="192.6" stroke="#000" stroke-width="1"/>
<text x="307" y="341" letter-spacing="0.35">VINA</text>
<line x1="307" y1="343.4" x2="333" y2="343.4" stroke="#000" stroke-width="1.6"/>
<line x1="320" y1="344" x2="345" y2="358" stroke="#000" stroke-width="1"/>
<text x="394.2" y="341.6" letter-spacing="0.35">VOUT</text>
<line x1="394" y1="344.3" x2="424" y2="344.3" stroke="#000" stroke-width="1.6"/>
<line x1="410" y1="344.5" x2="436.7" y2="358.7" stroke="#000" stroke-width="1"/>
<text x="488.2" y="353.8" letter-spacing="0.35">VINB</text>
<line x1="489" y1="356.5" x2="514" y2="356.5" stroke="#000" stroke-width="1.6"/>
<line x1="503" y1="357" x2="527" y2="371.5" stroke="#000" stroke-width="1"/>
</g>
<g fill="#fff" stroke="#000" stroke-width="1.1">
<rect x="15" y="121" width="3" height="17" stroke="none"/>
<rect x="15" y="358" width="3" height="17" stroke="none"/>
<rect x="15" y="241" width="3" height="21" stroke="none"/>
<path d="M17.5 121 H19.5 V130 H24.5 L17.5 137"/>
<path d="M17.5 358 H19.5 V367 H24.5 L17.5 374"/>
<path d="M17.5 246 H19.5 V254.5 H24.5 L17.5 261.5"/>
<path d="M17.5 241 H19.5 V250.5 H24.5 L17.5 257.5"/>
<path d="M17.5 257.5 V262" fill="none"/>
<rect x="788" y="141" width="4" height="6" stroke="none"/>
<path d="M789.5 133 L782.8 139.2 H787.5 V149 H789.5"/>
<rect x="788" y="200" width="4" height="6" stroke="none"/>
<path d="M789.5 192 L782.8 198.2 H787.5 V208 H789.5"/>
<rect x="788" y="268" width="4" height="6" stroke="none"/>
<path d="M789.5 260 L782.8 266.2 H787.5 V276 H789.5"/>
<rect x="788" y="379" width="4" height="6" stroke="none"/>
<path d="M789.5 371 L782.8 377.2 H787.5 V387 H789.5"/>
</g>
<g shape-rendering="crispEdges">
<rect x="7" y="259" width="10" height="1" fill="#8080ff"/>
<rect x="5" y="260" width="12" height="1.5" fill="#0000ff"/>
<rect x="5" y="260" width="1" height="3" fill="#0000ff"/>
</g>
<g font-family="Liberation Sans" font-size="10" font-weight="bold">
<rect x="4" y="249" width="1.5" height="8" fill="#8080ff"/><text x="5" y="257" fill="#0000ff" textLength="7" lengthAdjust="spacingAndGlyphs">O</text><text x="6" y="257" fill="#00e600" textLength="6" lengthAdjust="spacingAndGlyphs">C</text><text x="10" y="257" fill="#a80000" textLength="5" lengthAdjust="spacingAndGlyphs">/</text><text x="11" y="257" fill="#00e600" textLength="5" lengthAdjust="spacingAndGlyphs">4</text>
<rect x="4" y="472" width="1.5" height="8" fill="#3d8585"/><text x="5.5" y="480" fill="#b4aa00" textLength="6" lengthAdjust="spacingAndGlyphs">C</text><text x="6.5" y="480" fill="#3d8585" textLength="5" lengthAdjust="spacingAndGlyphs">O</text><text x="11" y="480" fill="#e6007e" textLength="4" lengthAdjust="spacingAndGlyphs">8</text><rect x="14" y="472" width="1.5" height="8" fill="#3d8585"/><rect x="15.5" y="476" width="1.5" height="1" fill="#3d8585"/>
</g>
<path d="M5 483 L8.5 487 L12 483 M8.5 480 V487" stroke="#b4aa00" stroke-width="1.3" fill="none"/>
</svg>
<div class="pan" style="left:4px"></div>
<div class="ph" style="left:6px;background:#b4aa00"></div>
<div class="t" style="left:7px;top:494px;color:#000">C1</div>
<div class="bd" style="left:30px;width:10px;color:#b4aa00">F</div>
<div class="bd" style="left:41px;width:11px;color:#b4aa00">B</div>
<div class="bd" style="left:53px;width:18px;color:#b4aa00">D1</div>
<div class="t r" style="left:4px;width:68px;top:510px">2.00 V</div>
<div class="t r" style="left:4px;width:68px;top:524px">-16.0 V</div>
<div class="t r" style="left:4px;width:68px;top:538px;letter-spacing:1px">---</div>
<div class="t r" style="left:4px;width:68px;top:552px;letter-spacing:1px">---</div>
<div class="t r" style="left:4px;width:68px;top:566px;letter-spacing:1px">---</div>
<div class="t" style="left:7px;top:566px">&#x394;y</div>
<div class="pan" style="left:76px"></div>
<div class="ph" style="left:78px;background:#e6007e"></div>
<div class="t" style="left:79px;top:494px;color:#000">C2</div>
<div class="bd" style="left:102px;width:10px;color:#e6007e">F</div>
<div class="bd" style="left:113px;width:11px;color:#e6007e">B</div>
<div class="bd" style="left:125px;width:18px;color:#e6007e">D1</div>
<div class="t r" style="left:76px;width:68px;top:510px">2.00 V</div>
<div class="t r" style="left:76px;width:68px;top:524px">-16.0 V</div>
<div class="t r" style="left:76px;width:68px;top:538px;letter-spacing:1px">---</div>
<div class="t r" style="left:76px;width:68px;top:552px;letter-spacing:1px">---</div>
<div class="t r" style="left:76px;width:68px;top:566px;letter-spacing:1px">---</div>
<div class="t" style="left:79px;top:566px">&#x394;y</div>
<div class="pan" style="left:148px"></div>
<div class="ph" style="left:150px;background:#0000e6"></div>
<div class="t" style="left:151px;top:494px;color:#000">C3</div>
<div class="bd" style="left:174px;width:10px;color:#0000e6">F</div>
<div class="bd" style="left:185px;width:11px;color:#0000e6">B</div>
<div class="bd" style="left:197px;width:18px;color:#0000e6">D1</div>
<div class="t r" style="left:148px;width:68px;top:510px">10.0 V</div>
<div class="t r" style="left:148px;width:68px;top:524px">-200 mV</div>
<div class="t r" style="left:148px;width:68px;top:538px;letter-spacing:1px">---</div>
<div class="t r" style="left:148px;width:68px;top:552px;letter-spacing:1px">---</div>
<div class="t r" style="left:148px;width:68px;top:566px;letter-spacing:1px">---</div>
<div class="t" style="left:151px;top:566px">&#x394;y</div>
<div class="pan" style="left:220px"></div>
<div class="ph" style="left:222px;background:#00e600"></div>
<div class="t" style="left:223px;top:494px;color:#000">C4</div>
<div class="bd" style="left:246px;width:10px;color:#00e600">F</div>
<div class="bd" style="left:257px;width:11px;color:#00e600">B</div>
<div class="bd" style="left:269px;width:18px;color:#00e600">D1</div>
<div class="t r" style="left:220px;width:68px;top:510px">10.0 V</div>
<div class="t r" style="left:220px;width:68px;top:524px">0 mV</div>
<div class="t r" style="left:220px;width:68px;top:538px;letter-spacing:1px">---</div>
<div class="t r" style="left:220px;width:68px;top:552px;letter-spacing:1px">---</div>
<div class="t r" style="left:220px;width:68px;top:566px;letter-spacing:1px">---</div>
<div class="t" style="left:223px;top:566px">&#x394;y</div>
<div class="pan" style="left:292px"></div>
<div class="ph" style="left:294px;background:#a80000"></div>
<div class="t" style="left:295px;top:494px;color:#000">M2</div>
<div class="t r" style="left:292px;width:68px;top:510px">10.0 V</div>
<div class="t r" style="left:292px;width:68px;top:524px">1.0 ms</div>
<div class="t r" style="left:292px;width:68px;top:538px">731 mV</div>
<div class="t r" style="left:292px;width:68px;top:552px">22.72 V</div>
<div class="t r" style="left:292px;width:68px;top:566px">21.98 V</div>
<div class="t" style="left:295px;top:566px">&#x394;y</div>
<div class="pan" style="left:364px"></div>
<div class="ph" style="left:366px;background:#8080ff"></div>
<div class="t" style="left:367px;top:494px;color:#000">M3</div>
<div class="t r" style="left:364px;width:68px;top:510px">10.0 V</div>
<div class="t r" style="left:364px;width:68px;top:524px">1.0 ms</div>
<div class="t r" style="left:364px;width:68px;top:538px">22.31 V</div>
<div class="t r" style="left:364px;width:68px;top:552px">12.14 V</div>
<div class="t r" style="left:364px;width:68px;top:566px">-10.2 V</div>
<div class="t" style="left:367px;top:566px">&#x394;y</div>
<div class="pan" style="left:436px;background:#3f8080;border-top-color:#231b4f;border-left-color:#231b4f;border-right-color:#8d85c6;border-bottom-color:#8d85c6"></div>
<div class="t" style="left:441px;top:494px;color:#000">M4</div>
<div class="t r" style="left:436px;width:68px;top:511px;color:#000">2.00 V</div>
<div class="t r" style="left:436px;width:68px;top:525px;color:#000">1.0 ms</div>
<div class="t r" style="left:436px;width:68px;top:539px;color:#000">11.93 V</div>
<div class="t r" style="left:436px;width:68px;top:553px;color:#000">12.01 V</div>
<div class="t r" style="left:436px;width:68px;top:567px;color:#000">76 mV</div>
<div class="t" style="left:439px;top:567px;color:#000">&#x394;y</div>
<div class="pan" style="left:583px;width:112px;height:46px"></div>
<div class="ph" style="left:585px;width:108px;background:#c8c8c8"></div>
<div class="t" style="left:586px;top:495px;color:#000">Timebase</div>
<div class="t r" style="left:583px;width:110px;top:495px;color:#000">-980 &#x3bc;s</div>
<div class="t r" style="left:583px;width:111px;top:510px">1.00 ms/div</div>
<div class="t" style="left:587px;top:524px">500 kS</div>
<div class="t r" style="left:583px;width:110px;top:524px">50 MS/s</div>
<div class="pan" style="left:698px;width:97px;height:46px"></div>
<div class="ph" style="left:700px;width:93px;background:#c8c8c8"></div>
<div class="t" style="left:701px;top:495px;color:#000">Trigger</div>
<div class="bd" style="left:755px;width:16px;color:#c8c8c8">C1</div>
<div class="bd" style="left:772px;width:21px;color:#c8c8c8">DC</div>
<div class="t" style="left:701px;top:511px">Stop</div>
<div class="t r" style="left:698px;width:95px;top:511px">8.80 V</div>
<div class="t" style="left:701px;top:525px">Edge</div>
<div class="t r" style="left:698px;width:95px;top:525px">Positive</div>
<div class="t" style="left:589px;top:540px;color:#000">X1=</div>
<div class="t r" style="left:600px;width:85px;top:540px;color:#000">-4.02000 ms</div>
<div class="t" style="left:705px;top:540px;color:#000">&#x394;X=</div>
<div class="t r" style="left:700px;width:96px;top:540px;color:#000">10.000 ms</div>
<div class="t" style="left:589px;top:556px;color:#000">X2=</div>
<div class="t r" style="left:600px;width:85px;top:556px;color:#000">5.97998 ms</div>
<div class="t" style="left:695px;top:556px;color:#000">1/&#x394;X=</div>
<div class="t r" style="left:700px;width:97px;top:556px;color:#000">100.000 Hz</div>
<div class="t" style="left:652px;top:586px;color:#000;letter-spacing:0.15px">11/26/2014 11:55:18 AM</div>
<div style="position:absolute;left:6px;top:583px;width:60px;height:17px;background:#f6f6f6"></div>
<div class="t" style="left:10px;top:581px;font-size:14px;line-height:16px;color:#3c3c3c;letter-spacing:1.1px;-webkit-text-stroke:0.4px #3c3c3c">LeCroy</div>
<div style="position:absolute;left:10px;top:597px;width:43px;height:2px;background:#3c3c3c"></div>
<svg width="800" height="600" viewBox="0 0 800 600" style="position:absolute;left:0;top:0" fill="none" stroke-width="1.1">
<path d="M9.5 542 V551 M7.9 549 L9.5 551 L11.1 549" stroke="#fff"/>
<path d="M9.5 565 V556 M7.9 558 L9.5 556 L11.1 558" stroke="#fff"/>
<path d="M81.5 542 V551 M79.9 549 L81.5 551 L83.1 549" stroke="#fff"/>
<path d="M81.5 565 V556 M79.9 558 L81.5 556 L83.1 558" stroke="#fff"/>
<path d="M153.5 542 V551 M151.9 549 L153.5 551 L155.1 549" stroke="#fff"/>
<path d="M153.5 565 V556 M151.9 558 L153.5 556 L155.1 558" stroke="#fff"/>
<path d="M225.5 542 V551 M223.9 549 L225.5 551 L227.1 549" stroke="#fff"/>
<path d="M225.5 565 V556 M223.9 558 L225.5 556 L227.1 558" stroke="#fff"/>
<path d="M297.5 542 V551 M295.9 549 L297.5 551 L299.1 549" stroke="#fff"/>
<path d="M297.5 565 V556 M295.9 558 L297.5 556 L299.1 558" stroke="#fff"/>
<path d="M369.5 542 V551 M367.9 549 L369.5 551 L371.1 549" stroke="#fff"/>
<path d="M369.5 565 V556 M367.9 558 L369.5 556 L371.1 558" stroke="#fff"/>
<path d="M441.5 543 V552 M439.9 550 L441.5 552 L443.1 550" stroke="#000"/>
<path d="M441.5 566 V557 M439.9 559 L441.5 557 L443.1 559" stroke="#000"/>
<path d="M779.5 22.5 A4 3.5 0 1 1 786 26.5" stroke="#fff" stroke-width="1.2"/>
<polygon points="776,20 776,25.5 781.5,25.5" fill="#fff"/>
</svg>
</body></html>
